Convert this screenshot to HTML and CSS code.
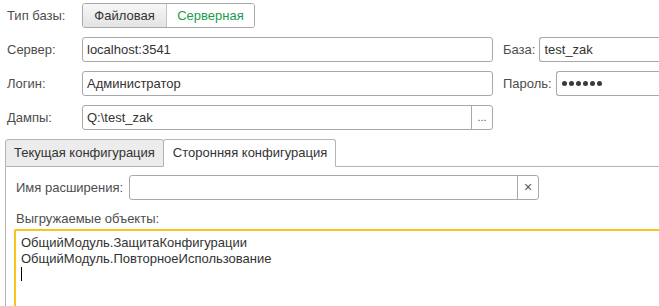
FILE: index.html
```html
<!doctype html>
<html lang="ru">
<head>
	<meta charset="UTF-8">
	<title>Выгрузка конфигурации</title>
	<link rel="stylesheet" href="styles.css">
</head>
<body>
	<div class="form">
		<div class="row">
			<span class="lbl">Тип базы:</span>
			<div class="toggle">
				<span class="toggle-item toggle-item-off">Файловая</span>
				<span class="toggle-item toggle-item-on">Серверная</span>
			</div>
		</div>
		<div class="row">
			<span class="lbl">Сервер:</span>
			<div class="field">localhost:3541</div>
			<span class="side-lbl">База:</span>
			<div class="field side-field">test_zak</div>
		</div>
		<div class="row">
			<span class="lbl">Логин:</span>
			<div class="field">Администратор</div>
			<span class="side-lbl">Пароль:</span>
			<div class="field side-field side-pass">
				<span class="dot"></span><span class="dot"></span><span class="dot"></span><span class="dot"></span><span class="dot"></span><span class="dot"></span>
			</div>
		</div>
		<div class="row">
			<span class="lbl">Дампы:</span>
			<div class="field field-btn">
				<span class="field-text">Q:\test_zak</span>
				<span class="field-act">...</span>
			</div>
		</div>

		<div class="tabs">
			<span class="tab">Текущая конфигурация</span>
			<span class="tab tab-active">Сторонняя конфигурация</span>
			<span class="tabs-rest"></span>
		</div>
		<div class="pane">
			<div class="row ext-row">
				<span class="ext-lbl">Имя расширения:</span>
				<div class="field field-btn ext-field">
					<span class="field-text"></span>
					<span class="field-act field-clear">×</span>
				</div>
			</div>
			<div class="list-lbl">Выгружаемые объекты:</div>
			<div class="memo">
				<div>ОбщийМодуль.ЗащитаКонфигурации</div>
				<div>ОбщийМодуль.ПовторноеИспользование</div>
				<div><span class="caret"></span></div>
			</div>
		</div>
	</div>
</body>
</html>
```

FILE: styles.css
```css
html, body {
	margin: 0;
	padding: 0;
	overflow: hidden;
}
body {
	width: 659px;
	height: 306px;
	background: #fff;
	font: 13px/16px "Liberation Sans", Arial, sans-serif;
	color: #4d4d4d;
}
.form {
	display: flex;
	flex-direction: column;
	height: 306px;
	box-sizing: border-box;
	padding-top: 3px;
}
/* строки формы */
.row {
	display: flex;
	align-items: center;
	height: 25px;
	margin-bottom: 9px;
	white-space: nowrap;
}
.lbl {
	flex-shrink: 0;
	width: 75px;
	padding-left: 7px;
}
.field {
	flex-shrink: 0;
	box-sizing: border-box;
	width: 411px;
	height: 25px;
	padding: 0 4px;
	border: 1px solid #a9a9a9;
	border-radius: 3px;
	line-height: 23px;
	color: #333;
}
.side-lbl {
	flex-shrink: 0;
	margin-left: 10px;
	padding-right: 4px;
}
.side-field {
	flex: 1;
	width: auto;
	border-right: 0;
	border-radius: 3px 0 0 3px;
}
.side-pass {
	display: flex;
	align-items: center;
	gap: 2px;
	padding-left: 5px;
}
.dot {
	width: 5px;
	height: 5px;
	border-radius: 50%;
	background: #3a3a3a;
}
.field-btn {
	display: flex;
	padding: 0;
}
.field-text {
	flex: 1;
	padding: 0 4px;
}
.field-act {
	width: 20px;
	border-left: 1px solid #a9a9a9;
	text-align: center;
	color: #555;
	font-size: 11px;
}
.field-clear {
	font-size: 14px;
}
/* переключатель */
.toggle {
	display: flex;
	box-sizing: border-box;
	height: 25px;
	border: 1px solid #a9a9a9;
	border-radius: 3px;
	overflow: hidden;
}
.toggle-item {
	line-height: 23px;
	text-align: center;
}
.toggle-item-off {
	width: 83px;
	color: #333;
	background: linear-gradient(#f7f7f7, #e3e3e3);
	border-right: 1px solid #c4c4c4;
}
.toggle-item-on {
	width: 87px;
	color: #1a9c4c;
	background: #fff;
}
/* закладки */
.tabs {
	display: flex;
	margin-left: 5px;
	height: 28px;
	white-space: nowrap;
}
.tab {
	box-sizing: border-box;
	height: 28px;
	padding: 0 8px;
	line-height: 26px;
	color: #333;
	background: #ececec;
	border: 1px solid #b4b4b4;
	border-radius: 3px 3px 0 0;
}
.tab-active {
	margin-left: -1px;
	padding: 0 8px 0 9px;
	background: #fff;
	border-bottom-color: #fff;
}
.tabs-rest {
	flex: 1;
	border-bottom: 1px solid #b4b4b4;
}
.pane {
	flex: 1;
	display: flex;
	flex-direction: column;
	margin-left: 5px;
	border-left: 1px solid #b4b4b4;
	padding-top: 8px;
}
.ext-row {
	margin-bottom: 11px;
}
.ext-lbl {
	flex-shrink: 0;
	width: 113px;
	padding-left: 10px;
}
.ext-field {
	width: 410px;
}
.list-lbl {
	padding-left: 10px;
	margin-bottom: 2px;
}
.memo {
	flex: 1;
	margin-left: 8px;
	border: 2px solid #f6c51f;
	border-right: 0;
	border-bottom: 0;
	border-radius: 2px 0 0 0;
	padding: 4px 5px;
	color: #333;
}
.caret {
	display: inline-block;
	width: 1px;
	height: 14px;
	background: #000;
	vertical-align: -2px;
}
```
